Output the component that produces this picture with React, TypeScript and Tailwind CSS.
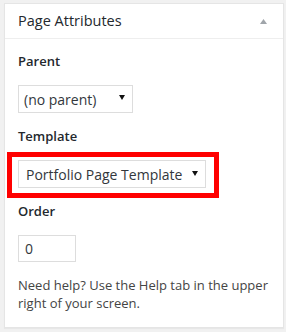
import React from "react";

function Caret({ className = "" }: { className?: string }) {
  return (
    <svg width="6" height="5" viewBox="0 0 6 5" className={className}>
      <polygon points="0,0 6,0 3,5" fill="#111" />
    </svg>
  );
}

export default function App() {
  return (
    <div
      className="w-[286px] h-[332px] bg-[#f1f1f1] pt-[3px] pl-[4px]"
      style={{ fontFamily: '"Open Sans", "Noto Sans", sans-serif' }}
    >
      <div className="w-[280px] h-[325px] bg-white border border-[#e5e5e5] shadow-[0_1px_1px_rgba(0,0,0,0.04)] flex flex-col">
        <div className="h-[35px] border-b border-[#eeeeee] flex items-center justify-between pl-[13px] pr-[16px]">
          <h2 className="text-[14.5px] leading-[18px] text-[#23282d]">Page Attributes</h2>
          <svg width="7" height="5" viewBox="0 0 7 5">
            <polygon points="0,5 7,5 3.5,0" fill="#a0a5aa" />
          </svg>
        </div>
        <div className="px-[13px] flex flex-col items-start">
          <p className="mt-[13px] text-[13px] leading-[18px] font-semibold text-[#23282d]">Parent</p>
          <div className="mt-[15px] w-[115px] h-[28px] border border-[#dddddd] flex items-center justify-between pl-[5px] pr-[7px] text-[14px] text-[#32373c]">
            <span>(no parent)</span>
            <Caret className="-mt-[3px]" />
          </div>
          <p className="mt-[14px] text-[13px] leading-[18px] font-semibold text-[#23282d]">Template</p>
          <div className="mt-[7px] -ml-[11px] w-[212px] border-[5px] border-[#ff0000] pt-[3px] pb-[5px] pl-[6px]">
            <div className="w-[188px] h-[28px] border border-[#dddddd] flex items-center justify-between pl-[7px] pr-[7px] text-[14px] text-[#32373c]">
              <span>Portfolio Page Template</span>
              <Caret className="-mt-[1px]" />
            </div>
          </div>
          <p className="mt-[4px] text-[13px] leading-[18px] font-semibold text-[#23282d]">Order</p>
          <div className="mt-[15px] w-[58px] h-[27px] border border-[#dddddd] flex items-center pl-[6px] text-[14px] text-[#32373c]">
            0
          </div>
          <p className="mt-[14px] text-[13px] leading-[18px] text-[#444444] w-[255px]">
            Need help? Use the Help tab in the upper right of your screen.
          </p>
        </div>
      </div>
    </div>
  );
}
